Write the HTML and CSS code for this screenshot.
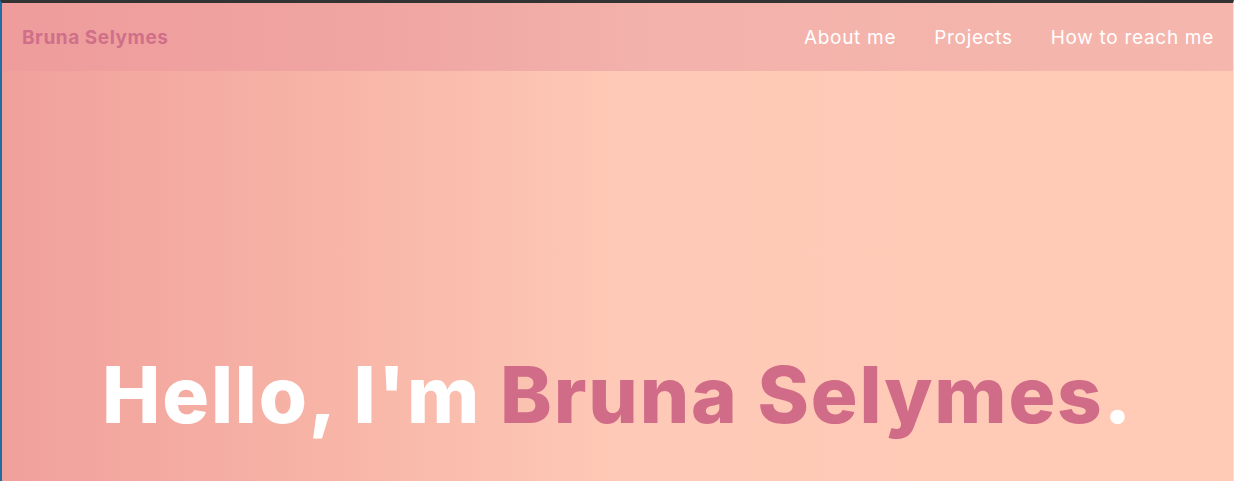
FILE: index.html
```html
<!DOCTYPE html>
<html lang="en">
<head>
<meta charset="utf-8">
<title>Bruna Selymes</title>
<link rel="stylesheet" href="styles.css">
</head>
<body>
<div class="frame">
  <div class="page">
    <header class="topbar">
      <a class="brand" href="#">Bruna Selymes</a>
      <nav class="menu">
        <a href="#about">About me</a>
        <a href="#projects">Projects</a>
        <a href="#contact">How to reach me</a>
      </nav>
    </header>
    <section class="hero">
      <h1 class="title">Hello, I'm <span class="name">Bruna Selymes</span><span class="dot">.</span></h1>
    </section>
  </div>
</div>
</body>
</html>
```
FILE: styles.css
```css
html, body {
  margin: 0;
  padding: 0;
  height: 100%;
  overflow: hidden;
}
body {
  background: #323232;
  font-family: "Inter", "Liberation Sans", sans-serif;
}
.frame {
  height: 100%;
  box-sizing: border-box;
  border-top: 3px solid #333333;
  border-left: 2px solid #1f6ea3;
  border-right: 1px solid #efe2df;
}
.page {
  height: 100%;
  display: flex;
  flex-direction: column;
  background: linear-gradient(90deg, #f0a09b 0%, #f7b3a6 25%, #fec9b6 50%, #ffcbb7 100%);
}
.topbar {
  height: 68px;
  flex: 0 0 68px;
  display: flex;
  align-items: center;
  justify-content: space-between;
  padding: 0 19px 0 20px;
  background: linear-gradient(90deg, #ee9c9c 0%, #f0a5a2 30%, #f3b3ac 55%, #f5b6ad 100%);
}
.brand {
  color: #d06f89;
  font-weight: 700;
  font-size: 19px;
  letter-spacing: 0.55px;
  text-decoration: none;
}
.menu {
  display: flex;
  gap: 38px;
}
.menu a {
  color: #ffffff;
  font-size: 19px;
  font-weight: 400;
  letter-spacing: 0.7px;
  text-decoration: none;
}
.hero {
  flex: 1;
  display: flex;
  justify-content: center;
  padding-top: 285px;
}
.title {
  margin: 0;
  font-size: 78px;
  font-weight: 800;
  line-height: 1;
  color: #ffffff;
  letter-spacing: 1.8px;
  white-space: nowrap;
}
.name {
  color: #d06c87;
}
.dot {
  color: #ffffff;
}
```
